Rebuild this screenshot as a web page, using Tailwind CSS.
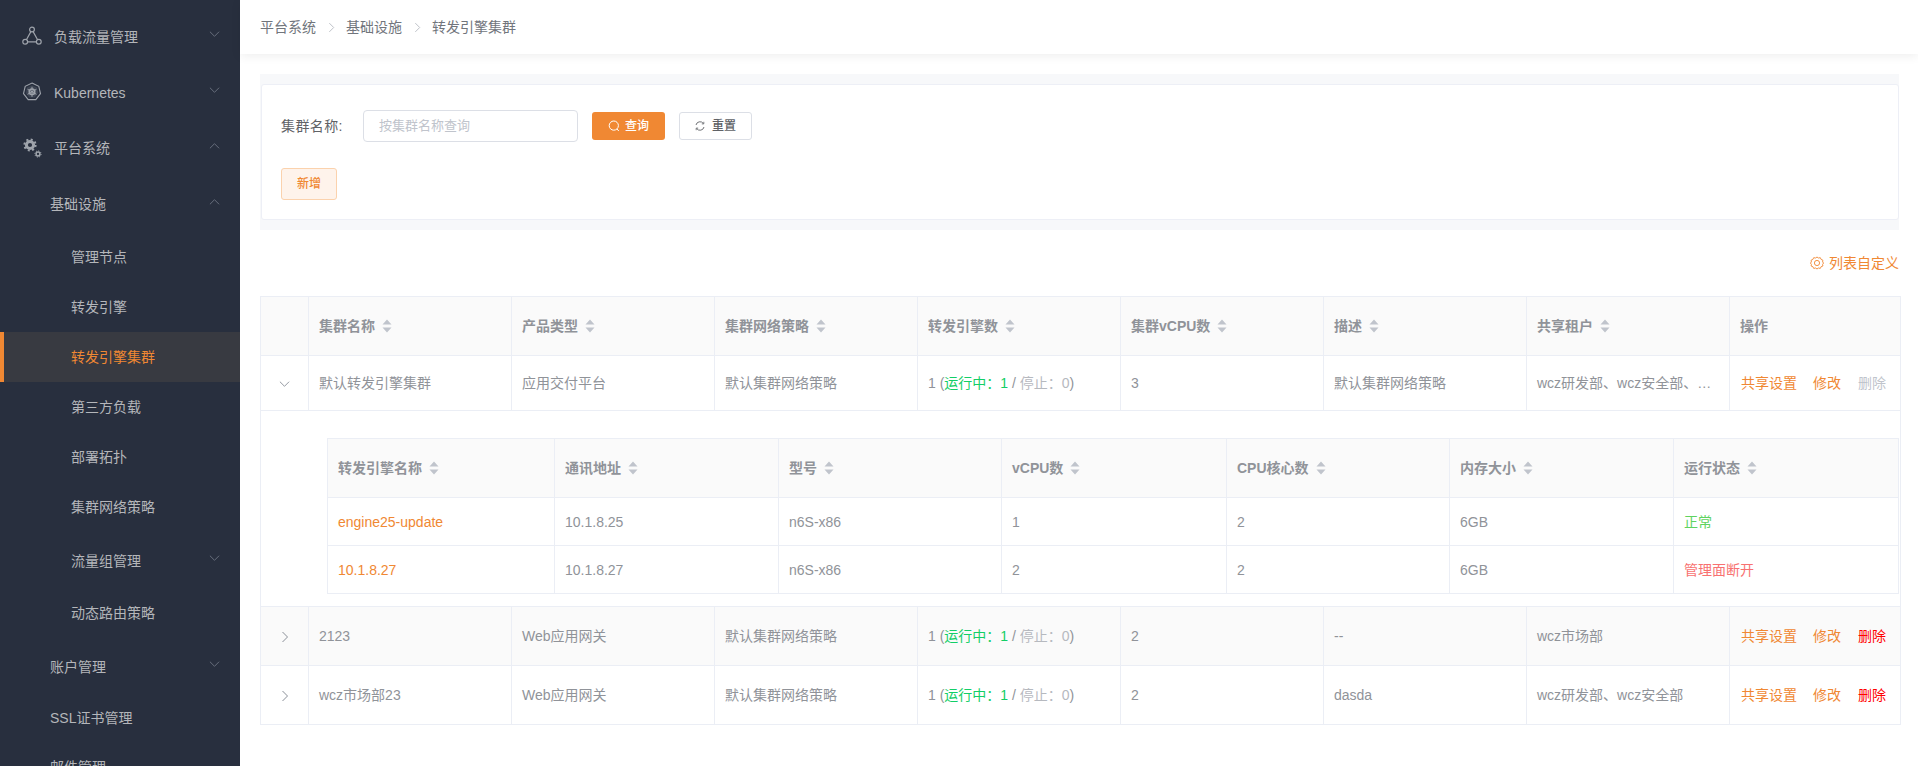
<!DOCTYPE html>
<html lang="zh-CN">
<head>
    <meta charset="UTF-8">
    <title>转发引擎集群</title>
    <script src="https://cdn.jsdelivr.net/npm/@tailwindcss/browser@4"></script>
</head>
<body class="flex h-[766px] overflow-hidden bg-white text-sm text-[#909399] font-['Liberation_Sans','Noto_Sans_CJK_SC',sans-serif]">

    <svg class="hidden">
        <symbol id="sort" viewBox="0 0 10 14"><path d="M5 0.5 9.5 5.5H0.5Z M0.5 8.5H9.5L5 13.5Z" fill="#c0c4cc"/></symbol>
        <symbol id="down" viewBox="0 0 12 8"><path d="M1 1.5 6 6.5 11 1.5" fill="none" stroke="currentColor" stroke-width="1"/></symbol>
        <symbol id="up" viewBox="0 0 12 8"><path d="M1 6.5 6 1.5 11 6.5" fill="none" stroke="currentColor" stroke-width="1"/></symbol>
        <symbol id="right" viewBox="0 0 8 12"><path d="M1.5 1 6.5 6 1.5 11" fill="none" stroke="currentColor" stroke-width="1"/></symbol>
    </svg>

    <!-- Sidebar -->
    <aside class="w-[240px] shrink-0 h-full overflow-hidden bg-[#282f3e] pt-2 text-[#b4b6ba]">
        <div class="flex items-center h-14 pl-[22px] pr-[20px]">
            <svg class="w-[20px] h-[20px] mr-[12px] text-[#9ea3ab]" viewBox="0 0 20 20" fill="none" stroke="currentColor" stroke-width="1.2">
                <circle cx="10" cy="3.5" r="2.4"/><circle cx="3.2" cy="15.8" r="2.4"/><circle cx="16.8" cy="15.8" r="2.4"/>
                <path d="M8.9 5.6 4.4 13.7M11.1 5.6 15.6 13.7M5.6 15.8H14.4"/>
            </svg>
            <span class="flex-1 pt-[2px]">负载流量管理</span>
            <svg class="w-[11px] h-[8px] -mt-1 text-[#6d7482]"><use href="#down"/></svg>
        </div>
        <div class="flex items-center h-14 pl-[22px] pr-[20px]">
            <svg class="w-[20px] h-[20px] mr-[12px] text-[#9ea3ab]" viewBox="0 0 20 20" fill="none" stroke="currentColor">
                <path d="M10 1 16.8 4.3 18.5 11.7 13.8 17.6H6.2L1.5 11.7 3.2 4.3Z" stroke-width="1.1"/>
                <path d="M10 3.2 15 5.6 16.2 11 12.8 15.4H7.2L3.8 11 5 5.6Z" fill="#3d4452" stroke="none"/>
                <circle cx="10" cy="9.8" r="2.8" stroke-width="1.5"/>
                <path d="M10 4.8V14.8M5.6 7.3 14.4 12.3M14.4 7.3 5.6 12.3" stroke-width="1"/>
            </svg>
            <span class="flex-1 pt-[2px]">Kubernetes</span>
            <svg class="w-[11px] h-[8px] -mt-1 text-[#6d7482]"><use href="#down"/></svg>
        </div>
        <div class="flex items-center h-14 pl-[22px] pr-[20px]">
            <svg class="w-[20px] h-[20px] mr-[12px] text-[#9ea3ab]" viewBox="0 0 20 20" fill="none" stroke="currentColor">
                <circle cx="8" cy="7" r="3.6" stroke-width="3"/>
                <circle cx="8" cy="7" r="5.6" stroke-width="2" stroke-dasharray="2 2.4"/>
                <circle cx="16" cy="16" r="1.9" stroke-width="1.5"/>
                <circle cx="16" cy="16" r="3.1" stroke-width="1" stroke-dasharray="1.2 1.2"/>
            </svg>
            <span class="flex-1">平台系统</span>
            <svg class="w-[11px] h-[8px] -mt-1 text-[#6d7482]"><use href="#up"/></svg>
        </div>
        <div class="flex items-center h-14 pl-[50px] pr-[20px]">
            <span class="flex-1">基础设施</span>
            <svg class="w-[11px] h-[8px] -mt-1 text-[#6d7482]"><use href="#up"/></svg>
        </div>
        <div class="flex items-center h-[50px] pl-[71px]">管理节点</div>
        <div class="flex items-center h-[50px] pl-[71px]">转发引擎</div>
        <div class="flex items-center h-[50px] pl-[67px] bg-[#383a41] border-l-4 border-[#f08833] text-[#f08833]">转发引擎集群</div>
        <div class="flex items-center h-[50px] pl-[71px]">第三方负载</div>
        <div class="flex items-center h-[50px] pl-[71px]">部署拓扑</div>
        <div class="flex items-center h-[50px] pl-[71px]">集群网络策略</div>
        <div class="flex items-center h-14 pl-[71px] pr-[20px]">
            <span class="flex-1 pt-[2px]">流量组管理</span>
            <svg class="w-[11px] h-[8px] -mt-1 text-[#6d7482]"><use href="#down"/></svg>
        </div>
        <div class="flex items-center h-[50px] pl-[71px]">动态路由策略</div>
        <div class="flex items-center h-14 pl-[50px] pr-[20px]">
            <span class="flex-1 pt-[2px]">账户管理</span>
            <svg class="w-[11px] h-[8px] -mt-1 text-[#6d7482]"><use href="#down"/></svg>
        </div>
        <div class="flex items-center h-[48px] pl-[50px]">SSL证书管理</div>
        <div class="flex items-center h-[50px] pl-[50px]">邮件管理</div>
    </aside>

    <!-- Main -->
    <main class="flex-1 min-w-0">
        <div class="relative flex items-center h-[54px] pl-[20px] text-[#71757c] shadow-[0_2px_10px_rgba(0,0,0,0.07)]">
            <span>平台系统</span>
            <svg class="w-[7px] h-[11px] ml-[12px] mr-[11px] text-[#b4b8bf]"><use href="#right"/></svg>
            <span>基础设施</span>
            <svg class="w-[7px] h-[11px] ml-[12px] mr-[11px] text-[#b4b8bf]"><use href="#right"/></svg>
            <span>转发引擎集群</span>
        </div>

        <div class="pl-[20px] pr-[19px] pt-[20px]">
            <!-- Filter -->
            <div class="bg-[#f7f8fa] py-[10px] pl-px">
                <div class="h-[136px] bg-white border border-[#edeff6] rounded-[3px] pl-[19px] pt-[25px]">
                    <div class="flex items-center h-[32px]">
                        <span class="w-[82px] text-[#606266] tracking-[0.4px]">集群名称:</span>
                        <div class="w-[215px] h-[32px] flex items-center pl-[15px] border border-[#dcdfe6] rounded-[4px] text-[#c0c4cc] text-[13px]">按集群名称查询</div>
                        <button class="flex items-center justify-center w-[73px] h-[28px] ml-[14px] rounded-[3px] bg-[#f08833] text-white text-xs font-medium">
                            <svg class="w-[12px] h-[12px] mr-[5px]" viewBox="0 0 12 12" fill="none" stroke="currentColor"><circle cx="5.8" cy="5.6" r="4.6"/><path d="M9 9 10.8 11"/></svg>查询
                        </button>
                        <button class="flex items-center justify-center w-[73px] h-[28px] ml-[14px] rounded-[3px] border border-[#dcdfe6] bg-white text-[#606266] text-xs font-medium">
                            <svg class="w-[10px] h-[10px] mr-[7px]" viewBox="0 0 10 10" fill="none" stroke="currentColor" stroke-width="0.9"><path d="M1 4A4.1 4.1 0 0 1 8.3 2.4M9 6A4.1 4.1 0 0 1 1.7 7.6"/><path d="M8.8 0.8V2.9H6.8M1.2 9.2V7.1H3.2" stroke-width="0.8"/></svg>重置
                        </button>
                    </div>
                    <button class="block w-[56px] h-[32px] mt-[26px] rounded-[3px] border border-[#fbd2ad] bg-[#fef3eb] text-[#f08833] text-xs font-medium">新增</button>
                </div>
            </div>

            <div class="flex items-center justify-end h-[66px] text-[#f08833]">
                <svg class="w-[14px] h-[14px] mr-[5px]" viewBox="0 0 14 14" fill="none" stroke="currentColor" stroke-width="0.9">
                    <path d="M7 1 8.4 2 10.3 1.7 11.1 3.4 12.9 4.2 12.6 6 13.6 7 12.6 8.4 12.9 10 11.1 10.7 10.3 12.4 8.4 12 7 13 5.6 12 3.7 12.4 2.9 10.7 1.1 10 1.4 8.4 0.4 7 1.4 6 1.1 4.2 2.9 3.4 3.7 1.7 5.6 2Z"/>
                    <circle cx="7" cy="7" r="2.6"/>
                </svg>
                列表自定义
            </div>

            <!-- Cluster table -->
            <table class="w-[1640px] table-fixed border-collapse border border-[#ebeef5]">
                <colgroup>
                    <col class="w-[48px]"><col class="w-[203px]"><col class="w-[203px]"><col class="w-[203px]"><col class="w-[203px]"><col class="w-[203px]"><col class="w-[203px]"><col class="w-[203px]"><col class="w-[171px]">
                </colgroup>
                <thead>
                    <tr class="h-[59px] bg-[#fafafa] text-left font-bold">
                        <th class="border border-[#ebeef5]"></th>
                        <th class="border border-[#ebeef5] pl-[10px]"><span class="flex items-center gap-[7px]">集群名称<svg class="w-[10px] h-[14px]"><use href="#sort"/></svg></span></th>
                        <th class="border border-[#ebeef5] pl-[10px]"><span class="flex items-center gap-[7px]">产品类型<svg class="w-[10px] h-[14px]"><use href="#sort"/></svg></span></th>
                        <th class="border border-[#ebeef5] pl-[10px]"><span class="flex items-center gap-[7px]">集群网络策略<svg class="w-[10px] h-[14px]"><use href="#sort"/></svg></span></th>
                        <th class="border border-[#ebeef5] pl-[10px]"><span class="flex items-center gap-[7px]">转发引擎数<svg class="w-[10px] h-[14px]"><use href="#sort"/></svg></span></th>
                        <th class="border border-[#ebeef5] pl-[10px]"><span class="flex items-center gap-[7px]">集群vCPU数<svg class="w-[10px] h-[14px]"><use href="#sort"/></svg></span></th>
                        <th class="border border-[#ebeef5] pl-[10px]"><span class="flex items-center gap-[7px]">描述<svg class="w-[10px] h-[14px]"><use href="#sort"/></svg></span></th>
                        <th class="border border-[#ebeef5] pl-[10px]"><span class="flex items-center gap-[7px]">共享租户<svg class="w-[10px] h-[14px]"><use href="#sort"/></svg></span></th>
                        <th class="border border-[#ebeef5] pl-[10px]">操作</th>
                    </tr>
                </thead>
                <tbody>
                    <tr class="h-[55px]">
                        <td class="border border-[#ebeef5] text-center"><svg class="inline-block w-[11px] h-[8px] text-[#8a8f98]"><use href="#down"/></svg></td>
                        <td class="border border-[#ebeef5] pl-[10px]">默认转发引擎集群</td>
                        <td class="border border-[#ebeef5] pl-[10px]">应用交付平台</td>
                        <td class="border border-[#ebeef5] pl-[10px]">默认集群网络策略</td>
                        <td class="border border-[#ebeef5] pl-[10px]">1 (<span class="text-[#13ce66]">运行中：1</span> / <span class="text-[#b6b9bf]">停止：0</span>)</td>
                        <td class="border border-[#ebeef5] pl-[10px]">3</td>
                        <td class="border border-[#ebeef5] pl-[10px]">默认集群网络策略</td>
                        <td class="border border-[#ebeef5] pl-[10px] whitespace-nowrap">wcz研发部、wcz安全部、…</td>
                        <td class="border border-[#ebeef5] pl-[11px] text-[#f08833] whitespace-nowrap">共享设置<span class="ml-[16px]">修改</span><span class="ml-[17px] text-[#c0c4cc]">删除</span></td>
                    </tr>
                    <tr class="h-[196px]">
                        <td colspan="9" class="border border-[#ebeef5] pl-[66px] pr-px pt-[27px] pb-[12px] align-top">
                            <table class="w-full table-fixed border-collapse border border-[#ebeef5]">
                                <colgroup>
                                    <col class="w-[227px]"><col class="w-[224px]"><col class="w-[223px]"><col class="w-[225px]"><col class="w-[223px]"><col class="w-[224px]"><col class="w-[225px]">
                                </colgroup>
                                <thead>
                                    <tr class="h-[59px] bg-[#fafafa] text-left font-bold">
                                        <th class="border border-[#ebeef5] pl-[10px]"><span class="flex items-center gap-[7px]">转发引擎名称<svg class="w-[10px] h-[14px]"><use href="#sort"/></svg></span></th>
                                        <th class="border border-[#ebeef5] pl-[10px]"><span class="flex items-center gap-[7px]">通讯地址<svg class="w-[10px] h-[14px]"><use href="#sort"/></svg></span></th>
                                        <th class="border border-[#ebeef5] pl-[10px]"><span class="flex items-center gap-[7px]">型号<svg class="w-[10px] h-[14px]"><use href="#sort"/></svg></span></th>
                                        <th class="border border-[#ebeef5] pl-[10px]"><span class="flex items-center gap-[7px]">vCPU数<svg class="w-[10px] h-[14px]"><use href="#sort"/></svg></span></th>
                                        <th class="border border-[#ebeef5] pl-[10px]"><span class="flex items-center gap-[7px]">CPU核心数<svg class="w-[10px] h-[14px]"><use href="#sort"/></svg></span></th>
                                        <th class="border border-[#ebeef5] pl-[10px]"><span class="flex items-center gap-[7px]">内存大小<svg class="w-[10px] h-[14px]"><use href="#sort"/></svg></span></th>
                                        <th class="border border-[#ebeef5] pl-[10px]"><span class="flex items-center gap-[7px]">运行状态<svg class="w-[10px] h-[14px]"><use href="#sort"/></svg></span></th>
                                    </tr>
                                </thead>
                                <tbody>
                                    <tr class="h-[48px]">
                                        <td class="border border-[#ebeef5] pl-[10px] text-[#f08833]">engine25-update</td>
                                        <td class="border border-[#ebeef5] pl-[10px]">10.1.8.25</td>
                                        <td class="border border-[#ebeef5] pl-[10px]">n6S-x86</td>
                                        <td class="border border-[#ebeef5] pl-[10px]">1</td>
                                        <td class="border border-[#ebeef5] pl-[10px]">2</td>
                                        <td class="border border-[#ebeef5] pl-[10px]">6GB</td>
                                        <td class="border border-[#ebeef5] pl-[10px] text-[#5fd35f]">正常</td>
                                    </tr>
                                    <tr class="h-[48px]">
                                        <td class="border border-[#ebeef5] pl-[10px] text-[#f08833]">10.1.8.27</td>
                                        <td class="border border-[#ebeef5] pl-[10px]">10.1.8.27</td>
                                        <td class="border border-[#ebeef5] pl-[10px]">n6S-x86</td>
                                        <td class="border border-[#ebeef5] pl-[10px]">2</td>
                                        <td class="border border-[#ebeef5] pl-[10px]">2</td>
                                        <td class="border border-[#ebeef5] pl-[10px]">6GB</td>
                                        <td class="border border-[#ebeef5] pl-[10px] text-[#f87171]">管理面断开</td>
                                    </tr>
                                </tbody>
                            </table>
                        </td>
                    </tr>
                    <tr class="h-[59px] bg-[#fafafa]">
                        <td class="border border-[#ebeef5] text-center"><svg class="inline-block w-[8px] h-[12px] text-[#8a8f98]"><use href="#right"/></svg></td>
                        <td class="border border-[#ebeef5] pl-[10px]">2123</td>
                        <td class="border border-[#ebeef5] pl-[10px]">Web应用网关</td>
                        <td class="border border-[#ebeef5] pl-[10px]">默认集群网络策略</td>
                        <td class="border border-[#ebeef5] pl-[10px]">1 (<span class="text-[#13ce66]">运行中：1</span> / <span class="text-[#b6b9bf]">停止：0</span>)</td>
                        <td class="border border-[#ebeef5] pl-[10px]">2</td>
                        <td class="border border-[#ebeef5] pl-[10px]">--</td>
                        <td class="border border-[#ebeef5] pl-[10px]">wcz市场部</td>
                        <td class="border border-[#ebeef5] pl-[11px] text-[#f08833] whitespace-nowrap">共享设置<span class="ml-[16px]">修改</span><span class="ml-[17px] text-[#ff0000]">删除</span></td>
                    </tr>
                    <tr class="h-[59px]">
                        <td class="border border-[#ebeef5] text-center"><svg class="inline-block w-[8px] h-[12px] text-[#8a8f98]"><use href="#right"/></svg></td>
                        <td class="border border-[#ebeef5] pl-[10px]">wcz市场部23</td>
                        <td class="border border-[#ebeef5] pl-[10px]">Web应用网关</td>
                        <td class="border border-[#ebeef5] pl-[10px]">默认集群网络策略</td>
                        <td class="border border-[#ebeef5] pl-[10px]">1 (<span class="text-[#13ce66]">运行中：1</span> / <span class="text-[#b6b9bf]">停止：0</span>)</td>
                        <td class="border border-[#ebeef5] pl-[10px]">2</td>
                        <td class="border border-[#ebeef5] pl-[10px]">dasda</td>
                        <td class="border border-[#ebeef5] pl-[10px]">wcz研发部、wcz安全部</td>
                        <td class="border border-[#ebeef5] pl-[11px] text-[#f08833] whitespace-nowrap">共享设置<span class="ml-[16px]">修改</span><span class="ml-[17px] text-[#ff0000]">删除</span></td>
                    </tr>
                </tbody>
            </table>
        </div>
    </main>
</body>
</html>
